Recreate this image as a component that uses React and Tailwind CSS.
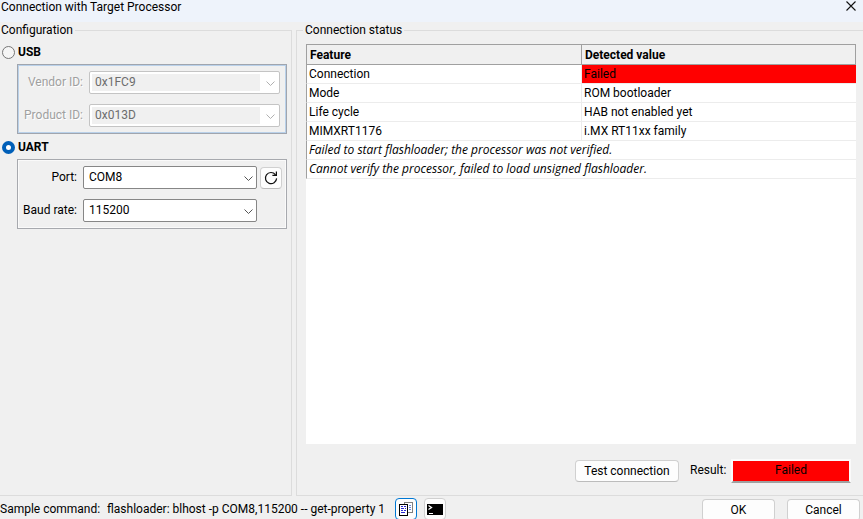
import React from "react";

function Combo({ id, value }) {
  return (
    <div className="relative h-[23px] w-[174px]">
      <select
        id={id}
        defaultValue={value}
        className="block h-full w-full appearance-none rounded-[2px] border border-[#868686] bg-white pb-[2px] pl-[5px] leading-4 text-black"
      >
        <option>{value}</option>
      </select>
      <svg
        viewBox="0 0 9 5"
        className="pointer-events-none absolute right-1 top-[10px] h-[5px] w-[9px] text-[#555555]"
        fill="none"
        stroke="currentColor"
      >
        <path d="M0.5 0.5 L4.5 4.5 L8.5 0.5" />
      </svg>
    </div>
  );
}

function DisabledCombo({ id, value }) {
  return (
    <div className="relative flex h-[23px] w-[191px] rounded-[2px] border border-[#c4c4c4] bg-white p-[2px]">
      <select
        id={id}
        disabled
        defaultValue={value}
        className="h-full w-full appearance-none border-r-[17px] border-white bg-[#f0f0f0] pb-[2px] pl-[3px] leading-4 text-[#6d6d6d] opacity-100"
      >
        <option>{value}</option>
      </select>
      <svg
        viewBox="0 0 9 5"
        className="pointer-events-none absolute right-1 top-[9px] h-[5px] w-[9px] text-[#b0b0b0]"
        fill="none"
        stroke="currentColor"
      >
        <path d="M0.5 0.5 L4.5 4.5 L8.5 0.5" />
      </svg>
    </div>
  );
}

function Radio({ id, label, checked }) {
  return (
    <div className="flex h-4 items-center gap-[3px] pl-[2px]">
      <input
        type="radio"
        name="interface"
        id={id}
        defaultChecked={checked}
        className="size-[13px] appearance-none rounded-full border border-[#767676] bg-[#f5f5f5] checked:border-4 checked:border-[#005fb8] checked:bg-white"
      />
      <label htmlFor={id} className="font-bold">
        {label}
      </label>
    </div>
  );
}

function ActionButton({ children, className }) {
  return (
    <button
      type="button"
      className={"h-[22px] rounded border border-[#d0d0d0] border-b-[#bcbcbc] bg-[#fdfdfd] " + className}
    >
      {children}
    </button>
  );
}

const rows = [
  ["Connection", "Failed"],
  ["Mode", "ROM bootloader"],
  ["Life cycle", "HAB not enabled yet"],
  ["MIMXRT1176", "i.MX RT11xx family"],
];

const messages = [
  "Failed to start flashloader; the processor was not verified.",
  "Cannot verify the processor, failed to load unsigned flashloader.",
];

export default function App() {
  return (
    <div className="flex h-screen flex-col overflow-hidden bg-[#f0f0f0] font-[Roboto,sans-serif] text-[12px] leading-4 text-black">
      <header className="flex h-[22px] shrink-0 justify-between bg-[#eef3fb] pl-px pr-[7px]">
        <h1 className="leading-[14px]">Connection with Target Processor</h1>
        <button type="button" aria-label="Close" className="flex h-3 w-[10px] items-center">
          <svg viewBox="0 0 10 10" className="size-[10px]" stroke="#111" strokeWidth="1.1">
            <path d="M0.5 0.5 L9.5 9.5 M9.5 0.5 L0.5 9.5" />
          </svg>
        </button>
      </header>

      <main className="flex min-h-0 flex-1 gap-1">
        <fieldset className="w-[292px] shrink-0 border border-l-0 border-[#dcdcdc]">
          <legend className="pl-px pr-[2px]">Configuration</legend>
          <div className="pt-[6px]">
            <Radio id="usb" label="USB" />
            <div className="ml-[17px] mr-1 mt-1 flex h-[70px] flex-col gap-[10px] border border-[#a0a5ae] pr-[6px] pt-[6px] shadow-[inset_0_0_0_1px_#b9d1ea]">
              <div className="flex items-center justify-end gap-[6px]">
                <label htmlFor="vendor" className="pb-[2px] text-[#a0a0a0] [text-shadow:1px_1px_0_white]">Vendor ID:</label>
                <DisabledCombo id="vendor" value="0x1FC9" />
              </div>
              <div className="flex items-center justify-end gap-[6px]">
                <label htmlFor="product" className="pb-[2px] text-[#a0a0a0] [text-shadow:1px_1px_0_white]">Product ID:</label>
                <DisabledCombo id="product" value="0x013D" />
              </div>
            </div>
            <div className="pt-[5px]">
              <Radio id="uart" label="UART" checked />
            </div>
            <div className="ml-[17px] mr-1 mt-1 flex h-[70px] flex-col gap-[10px] border border-[#a7a9ae] pr-1 pt-[6px] shadow-[inset_0_0_0_1px_#fafafa]">
              <div className="flex items-center justify-end">
                <label htmlFor="port" className="pb-[2px] pr-[6px]">Port:</label>
                <Combo id="port" value="COM8" />
                <ActionButton className="ml-[3px] flex w-[22px] items-center justify-center">
                  <svg viewBox="0 0 14 14" className="size-[14px]" fill="none" stroke="#111" strokeWidth="1.2" aria-label="Refresh">
                    <path d="M12.6 7.4 A5.6 5.6 0 1 1 11.4 3.6 M12.4 0.6 V4.4 H8.4" />
                  </svg>
                </ActionButton>
              </div>
              <div className="flex items-center justify-end pr-[25px]">
                <label htmlFor="baud" className="pb-[2px] pr-[6px]">Baud rate:</label>
                <Combo id="baud" value="115200" />
              </div>
            </div>
          </div>
        </fieldset>

        <fieldset className="flex min-w-0 flex-1 flex-col border border-r-0 border-[#dcdcdc] pl-[9px] pr-[7px]">
          <legend className="-ml-[3px] px-[2px]">Connection status</legend>
          <div className="flex h-full flex-col pt-[6px]">
            <div className="min-h-0 flex-1 bg-white">
              <table className="w-full table-fixed border-separate border-spacing-0 text-left">
                <thead>
                  <tr className="h-[21px] bg-[#f0f0f0]">
                    <th className="w-[276px] border border-[#a0a0a0] px-[3px] py-0">Feature</th>
                    <th className="border border-l-0 border-[#a0a0a0] px-[3px] py-0">Detected value</th>
                  </tr>
                </thead>
                <tbody>
                  {rows.map(([feature, value]) => (
                    <tr key={feature} className="h-[19px]">
                      <td className="border-b border-l border-r border-b-[#ececec] border-l-[#a0a0a0] border-r-[#ececec] px-[2px] py-0">{feature}</td>
                      <td className={"border-b border-[#ececec] px-[2px] py-0 " + (value === "Failed" ? "bg-[#ff0000] bg-clip-padding" : "")}>{value}</td>
                    </tr>
                  ))}
                  {messages.map((m) => (
                    <tr key={m} className="h-[19px]">
                      <td colSpan={2} className="border-b border-l border-b-[#ececec] border-l-[#a0a0a0] px-[2px] py-0 font-['Open_Sans',sans-serif] italic">{m}</td>
                    </tr>
                  ))}
                </tbody>
              </table>
            </div>
            <div className="flex items-center justify-end pb-3 pr-[5px] pt-[15px]">
              <ActionButton className="w-[104px]">Test connection</ActionButton>
              <span className="ml-[11px] w-[41px] pb-[2px]">Result:</span>
              <output className="block h-6 w-[120px] border-2 border-[#fafafa] border-b-[#a0a0a0] bg-[#ff0000] bg-clip-padding text-center leading-[18px]">Failed</output>
            </div>
          </div>
        </fieldset>
      </main>

      <footer className="flex h-[23px] shrink-0 items-start pr-[3px] pt-[2px]">
        <span className="w-[107px] shrink-0 pt-[3px]">Sample command:</span>
        <span className="whitespace-nowrap pt-[3px]">flashloader: blhost -p COM8,115200 -- get-property 1</span>
        <button type="button" aria-label="Copy command" className="ml-[10px] flex size-[22px] shrink-0 items-center justify-center rounded border border-[#0078d4] bg-[#fdfdfd]">
          <svg viewBox="0 0 14 14" className="size-[14px]" fill="white" shapeRendering="crispEdges">
            <path d="M5.5 0.5 H13.5 V10.5 H5.5 Z" stroke="#808080" />
            <path d="M10 3.5 H12 M10 5.5 H12 M10 7.5 H12" stroke="#6a86d8" />
            <path d="M0.5 2.5 H8.5 V13.5 H0.5 Z" stroke="#000" />
            <path d="M2 4.5 H4 M5 4.5 H7 M2 6.5 H5 M6 6.5 H7 M2 8.5 H4 M5 8.5 H7 M2 10.5 H6" stroke="#2a2ad0" />
          </svg>
        </button>
        <button type="button" aria-label="Open terminal" className="ml-[7px] flex size-[22px] shrink-0 items-center justify-center rounded border border-[#d0d0d0] bg-[#fdfdfd]">
          <svg viewBox="0 0 16 11" className="h-[11px] w-4" fill="none" stroke="#fff">
            <path d="M0 0 H16 V11 H0 Z" fill="#000" stroke="none" />
            <path d="M1.5 1.5 L4.5 3.5 L1.5 5.5" strokeWidth="1.3" />
            <path d="M2 9.5 H6" />
          </svg>
        </button>
        <div className="ml-auto flex shrink-0 gap-3 pt-px">
          <ActionButton className="w-[73px]">OK</ActionButton>
          <ActionButton className="w-[73px]">Cancel</ActionButton>
        </div>
      </footer>
    </div>
  );
}
